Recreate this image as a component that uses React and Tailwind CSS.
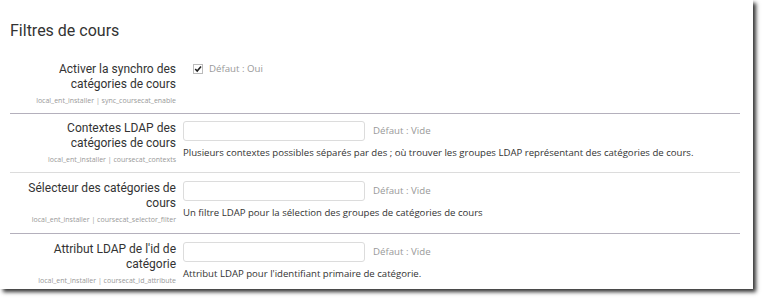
import React from "react";

const labelFont = { fontFamily: "Roboto, 'Liberation Sans', sans-serif" };
const bodyFont = { fontFamily: "'Open Sans', sans-serif" };

function Row({ label, code, children, border, pt }) {
  return (
    <div className={`flex ${pt} ${border}`}>
      <div className="w-[166px] shrink-0 text-right">
        <div className="text-[12px] leading-[15px] text-[#333]" style={labelFont}>{label}</div>
        <div className="mt-[4px] text-[7px] leading-[10px] text-[#999]" style={bodyFont}>{code}</div>
      </div>
      <div className="ml-[7px] flex-1">{children}</div>
    </div>
  );
}

function TextSetting({ desc }) {
  return (
    <div style={bodyFont}>
      <div className="flex items-center">
        <div className="w-[182px] h-[20px] border border-[#dcdcdc] rounded-[3px] bg-white"></div>
        <span className="ml-[8px] text-[9.7px] text-[#999]">Défaut : Vide</span>
      </div>
      <div className="mt-[5px] text-[9.6px] leading-[14px] text-[#333]">{desc}</div>
    </div>
  );
}

export default function App() {
  return (
    <div className="w-[762px] h-[298px] bg-white">
      <div className="w-[753px] h-[289px] bg-white shadow-[3px_3px_4px_rgba(0,0,0,0.8)] overflow-hidden pl-[10px]">
        <h3 className="pt-[20px] text-[16px] leading-[22px] text-[#333]" style={labelFont}>Filtres de cours</h3>
        <div className="w-[730px]">
          <div className="flex pt-[20px] h-[72px] border-b border-[#b4b0bc]">
            <div className="w-[166px] shrink-0 text-right">
              <div className="text-[12px] leading-[15px] text-[#333]" style={labelFont}>Activer la synchro des catégories de cours</div>
              <div className="mt-[4px] text-[7px] leading-[10px] text-[#999]" style={bodyFont}>local_ent_installer | sync_coursecat_enable</div>
            </div>
            <div className="ml-[17px] flex items-start pt-[1px]" style={bodyFont}>
              <svg width="10" height="10" viewBox="0 0 10 10" className="mt-[1px]">
                <rect x="0.5" y="0.5" width="9" height="9" fill="white" stroke="#bbb" />
                <path d="M2.2 5 L4.2 7 L8 2.6" fill="none" stroke="#222" strokeWidth="1.6" />
              </svg>
              <span className="ml-[6px] text-[9.7px] leading-[12px] text-[#999]">Défaut : Oui</span>
            </div>
          </div>
          <Row label="Contextes LDAP des catégories de cours" code="local_ent_installer | coursecat_contexts" pt="pt-[7px] h-[59px]" border="border-b border-[#dcdcdc]">
            <TextSetting desc="Plusieurs contextes possibles séparés par des ; où trouver les groupes LDAP représentant des catégories de cours." />
          </Row>
          <Row label="Sélecteur des catégories de cours" code="local_ent_installer | coursecat_selector_filter" pt="pt-[8px] h-[61px]" border="border-b border-[#b4b0bc]">
            <TextSetting desc="Un filtre LDAP pour la sélection des groupes de catégories de cours" />
          </Row>
          <Row label="Attribut LDAP de l'id de catégorie" code="local_ent_installer | coursecat_id_attribute" pt="pt-[8px]" border="">
            <TextSetting desc="Attribut LDAP pour l'identifiant primaire de catégorie." />
          </Row>
        </div>
      </div>
    </div>
  );
}
